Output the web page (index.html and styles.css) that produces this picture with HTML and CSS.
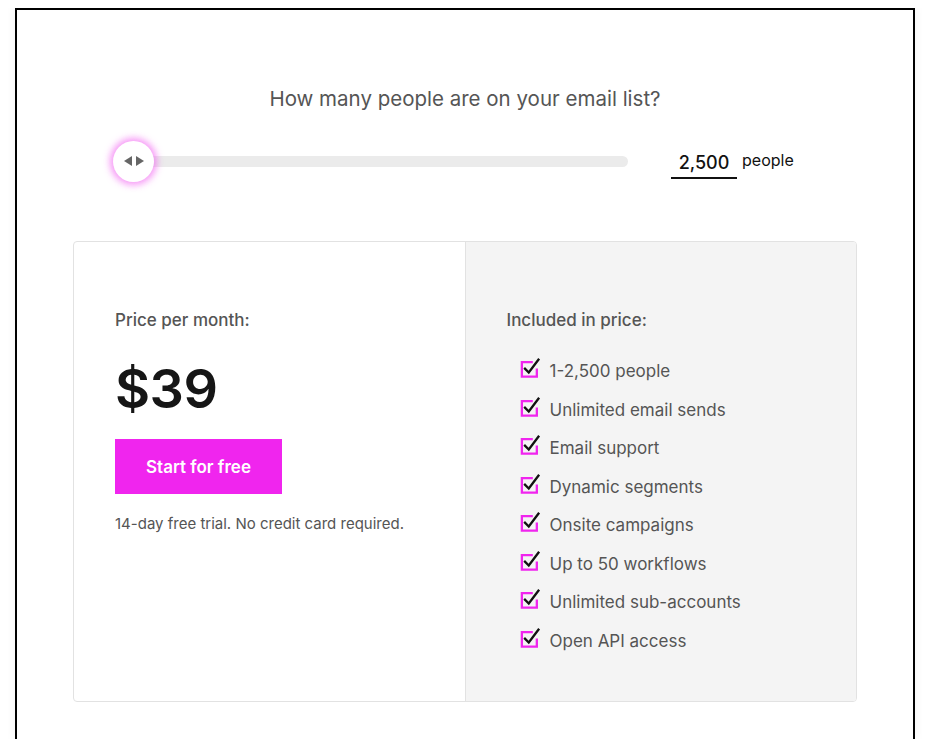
FILE: index.html
```html
<!DOCTYPE html>
<html lang="en">
<head>
  <meta charset="UTF-8">
  <meta name="viewport" content="width=device-width, initial-scale=1.0">
  <title>Pricing</title>
  <link rel="stylesheet" href="styles.css">
</head>
<body>
  <div class="frame">
    <div class="calculator">
      <p class="question">How many people are on your email list?</p>

      <!-- Slider + count -->
      <div class="slider-row">
        <div class="track">
          <div class="thumb">
            <span class="arrow left"></span>
            <span class="arrow right"></span>
          </div>
        </div>
        <div class="count">
          <span class="count-value">2,500</span>
          <span class="count-unit">people</span>
        </div>
      </div>

      <!-- Price card -->
      <div class="card">
        <div class="card-left">
          <div class="label">Price per month:</div>
          <div class="price">$39</div>
          <button class="cta">Start for free</button>
          <div class="note">14-day free trial. No credit card required.</div>
        </div>
        <div class="card-right">
          <div class="label">Included in price:</div>
          <ul class="features">
            <li><svg class="tick" viewBox="0 0 20 20"><path d="M12 4.5H2.5V17H15.5V10" fill="none" stroke="#f025ee" stroke-width="2"/><path d="M4.5 9.5L8.5 13.5L17.5 1.5" fill="none" stroke="#111" stroke-width="2"/></svg>1-2,500 people</li>
            <li><svg class="tick" viewBox="0 0 20 20"><path d="M12 4.5H2.5V17H15.5V10" fill="none" stroke="#f025ee" stroke-width="2"/><path d="M4.5 9.5L8.5 13.5L17.5 1.5" fill="none" stroke="#111" stroke-width="2"/></svg>Unlimited email sends</li>
            <li><svg class="tick" viewBox="0 0 20 20"><path d="M12 4.5H2.5V17H15.5V10" fill="none" stroke="#f025ee" stroke-width="2"/><path d="M4.5 9.5L8.5 13.5L17.5 1.5" fill="none" stroke="#111" stroke-width="2"/></svg>Email support</li>
            <li><svg class="tick" viewBox="0 0 20 20"><path d="M12 4.5H2.5V17H15.5V10" fill="none" stroke="#f025ee" stroke-width="2"/><path d="M4.5 9.5L8.5 13.5L17.5 1.5" fill="none" stroke="#111" stroke-width="2"/></svg>Dynamic segments</li>
            <li><svg class="tick" viewBox="0 0 20 20"><path d="M12 4.5H2.5V17H15.5V10" fill="none" stroke="#f025ee" stroke-width="2"/><path d="M4.5 9.5L8.5 13.5L17.5 1.5" fill="none" stroke="#111" stroke-width="2"/></svg>Onsite campaigns</li>
            <li><svg class="tick" viewBox="0 0 20 20"><path d="M12 4.5H2.5V17H15.5V10" fill="none" stroke="#f025ee" stroke-width="2"/><path d="M4.5 9.5L8.5 13.5L17.5 1.5" fill="none" stroke="#111" stroke-width="2"/></svg>Up to 50 workflows</li>
            <li><svg class="tick" viewBox="0 0 20 20"><path d="M12 4.5H2.5V17H15.5V10" fill="none" stroke="#f025ee" stroke-width="2"/><path d="M4.5 9.5L8.5 13.5L17.5 1.5" fill="none" stroke="#111" stroke-width="2"/></svg>Unlimited sub-accounts</li>
            <li><svg class="tick" viewBox="0 0 20 20"><path d="M12 4.5H2.5V17H15.5V10" fill="none" stroke="#f025ee" stroke-width="2"/><path d="M4.5 9.5L8.5 13.5L17.5 1.5" fill="none" stroke="#111" stroke-width="2"/></svg>Open API access</li>
          </ul>
        </div>
      </div>
    </div>
  </div>
</body>
</html>
```

FILE: styles.css
```css
* {
  margin: 0;
  padding: 0;
  box-sizing: border-box;
}

body {
  margin: 8px 8px 0;
  font-family: Inter, "Noto Sans", sans-serif;
  background-color: #fff;
  color: #555;
  overflow: hidden;
}

/* frame runs off the bottom of the window, so no bottom edge */
.frame {
  width: 900px;
  height: 731px;
  margin: 0 auto;
  border: 2px solid #000;
  border-bottom: none;
  box-shadow: 0 0 12px rgba(0, 0, 0, 0.05);
}

.calculator {
  width: 784px;
  margin: 0 auto;
  padding-top: 76px;
}

.question {
  text-align: center;
  font-size: 20.5px;
  line-height: 26px;
  color: #555;
}

.slider-row {
  display: flex;
  align-items: center;
  padding: 0 40px;
  margin-top: 24px;
  height: 50px;
}

.track {
  position: relative;
  width: 515px;
  height: 11px;
  border-radius: 6px;
  background-color: #ebebeb;
}

.thumb {
  position: absolute;
  left: 0;
  top: 50%;
  width: 41px;
  height: 41px;
  margin-top: -20.5px;
  border-radius: 50%;
  background-color: #fff;
  box-shadow: 0 0 7px 3px rgba(240, 80, 240, 0.6);
  display: flex;
  align-items: center;
  justify-content: center;
  gap: 4px;
}

.arrow {
  width: 0;
  height: 0;
  border-top: 5.5px solid transparent;
  border-bottom: 5.5px solid transparent;
}

.arrow.left {
  border-right: 8px solid #666;
}

.arrow.right {
  border-left: 8px solid #666;
}

.count {
  display: flex;
  align-items: center;
  margin-left: 43px;
  margin-top: 2px;
}

.count-value {
  width: 66px;
  padding: 6px 0 4px;
  border-bottom: 2px solid #111;
  text-align: center;
  font-size: 18px;
  font-weight: 500;
  color: #111;
}

.count-unit {
  margin-left: 5px;
  margin-top: -4px;
  font-size: 16px;
  color: #111;
}

.card {
  display: flex;
  margin-top: 55px;
  height: 461px;
  border: 1px solid #e2e2e2;
  border-radius: 4px;
  overflow: hidden;
}

.card-left,
.card-right {
  flex: 1;
  padding: 67px 40px 0 41px;
}

.card-right {
  background-color: #f4f4f4;
  border-left: 1px solid #e2e2e2;
}

.label {
  font-size: 17px;
  font-weight: 500;
  line-height: 22px;
  color: #555;
}

.price {
  margin-top: 25px;
  font-size: 54px;
  font-weight: 600;
  line-height: 66px;
  color: #161616;
  letter-spacing: -0.5px;
}

.cta {
  margin-top: 17px;
  width: 167px;
  height: 55px;
  border: none;
  background-color: #f025ee;
  color: #fff;
  font-family: inherit;
  font-size: 17px;
  font-weight: 600;
  cursor: pointer;
}

.note {
  margin-top: 20px;
  font-size: 15px;
  color: #555;
}

.features {
  list-style: none;
  margin-top: 21px;
  padding-left: 12px;
}

.features li {
  display: flex;
  align-items: center;
  height: 38.5px;
  font-size: 17px;
  color: #555;
}

.tick {
  width: 23px;
  height: 23px;
  margin-right: 8px;
  margin-top: -5px;
}
```
